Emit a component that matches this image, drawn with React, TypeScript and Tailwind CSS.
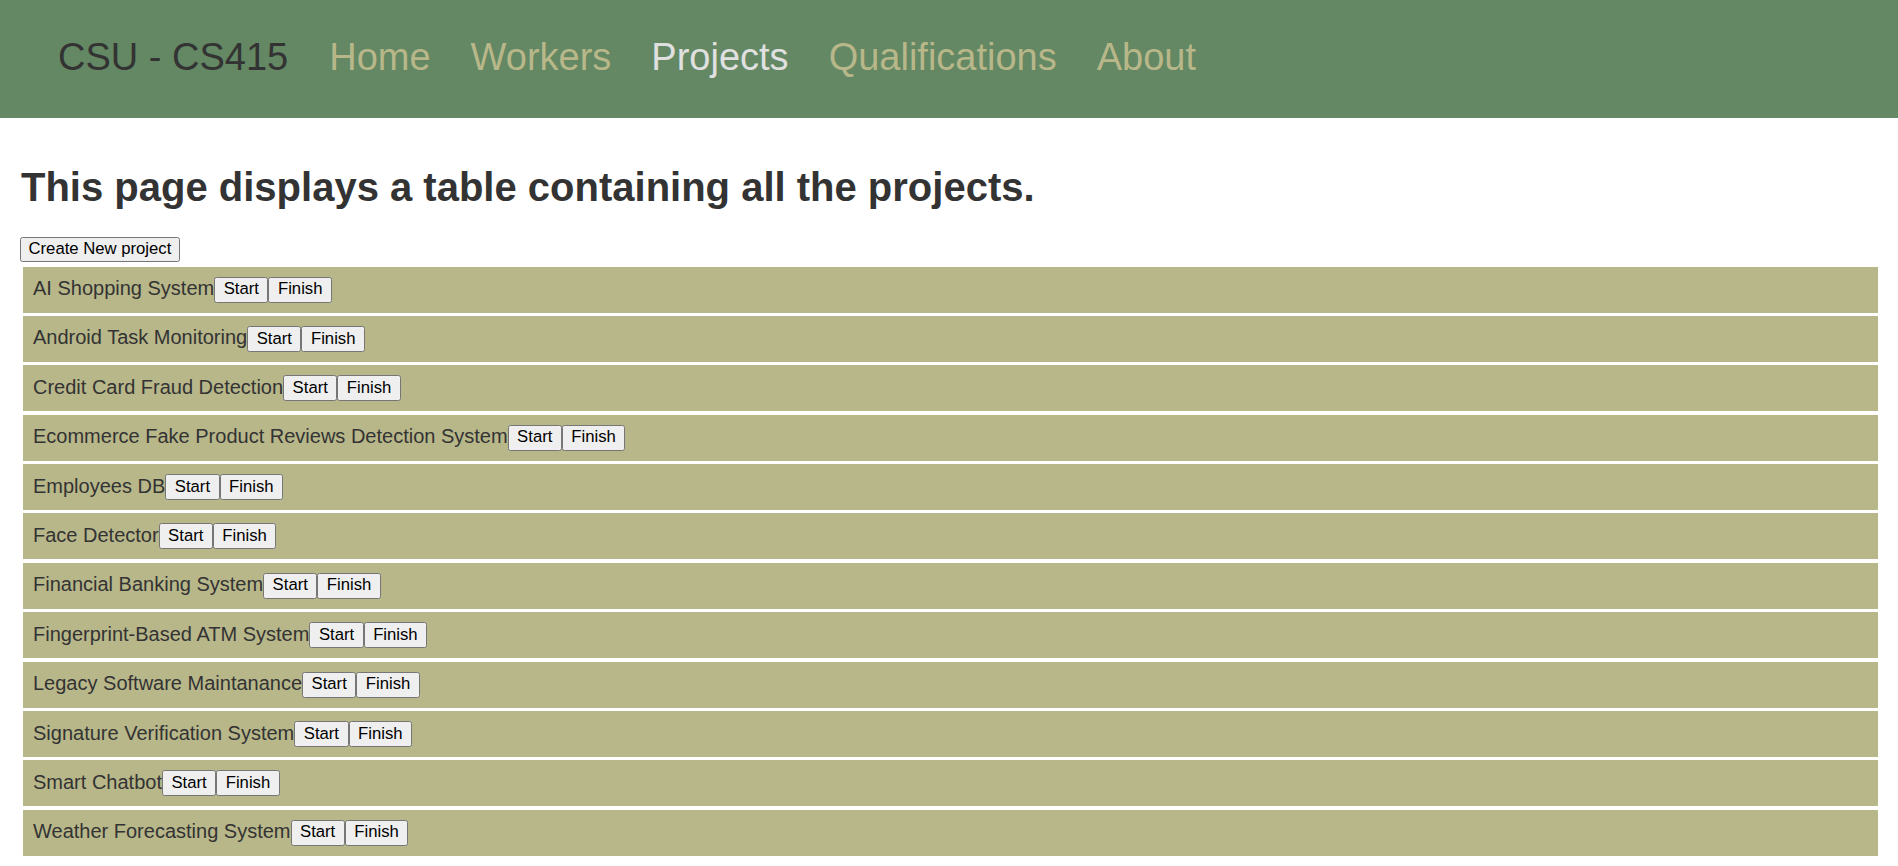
import React from 'react';

const projects = [
  'AI Shopping System',
  'Android Task Monitoring',
  'Credit Card Fraud Detection',
  'Ecommerce Fake Product Reviews Detection System',
  'Employees DB',
  'Face Detector',
  'Financial Banking System',
  'Fingerprint-Based ATM System',
  'Legacy Software Maintanance',
  'Signature Verification System',
  'Smart Chatbot',
  'Weather Forecasting System',
];

const navLinks = ['Home', 'Workers', 'Projects', 'Qualifications', 'About'];

function Btn({ children }: { children: React.ReactNode }) {
  return (
    <button className="h-[26px] px-[8.5px] bg-[#efefef] border-[1.25px] border-[#767676] rounded-[2.5px] text-[16.7px] text-black leading-none">
      {children}
    </button>
  );
}

export default function App() {
  return (
    <div className="min-h-screen bg-white font-['Liberation_Sans',Arial,sans-serif]">
      {/* Header */}
      <header className="h-[118px] bg-[#638863] flex items-center pl-[58px] pb-[4px]">
        <span className="text-[38px] text-[#333333]">CSU - CS415</span>
        <nav className="flex ml-[41px] gap-[40px]">
          {navLinks.map((link) => (
            <a
              key={link}
              href="#"
              className={`text-[38px] ${link === 'Projects' ? 'text-[#e0e0e0]' : 'text-[#b8b78a]'}`}
            >
              {link}
            </a>
          ))}
        </nav>
      </header>

      {/* Main Content */}
      <main className="pl-[20px] pr-[20px]">
        <h1 className="mt-[46px] mb-[27px] ml-[1px] text-[40px] leading-[46px] font-bold text-[#333333]">
          This page displays a table containing all the projects.
        </h1>
        <button className="h-[25px] px-[7.5px] bg-[#efefef] border-[1.25px] border-[#767676] rounded-[2.5px] text-[16.7px] text-black leading-none">
          Create New project
        </button>

        <div className="mt-[4.5px] ml-[3px] flex flex-col gap-[3.4px]">
          {projects.map((p) => (
            <div key={p} className="h-[46px] bg-[#b8b78a] flex items-center pl-[10px]">
              <span className="text-[20px] text-[#333333] -mt-[3px]">{p}</span>
              <Btn>Start</Btn>
              <Btn>Finish</Btn>
            </div>
          ))}
        </div>
      </main>
    </div>
  );
}
